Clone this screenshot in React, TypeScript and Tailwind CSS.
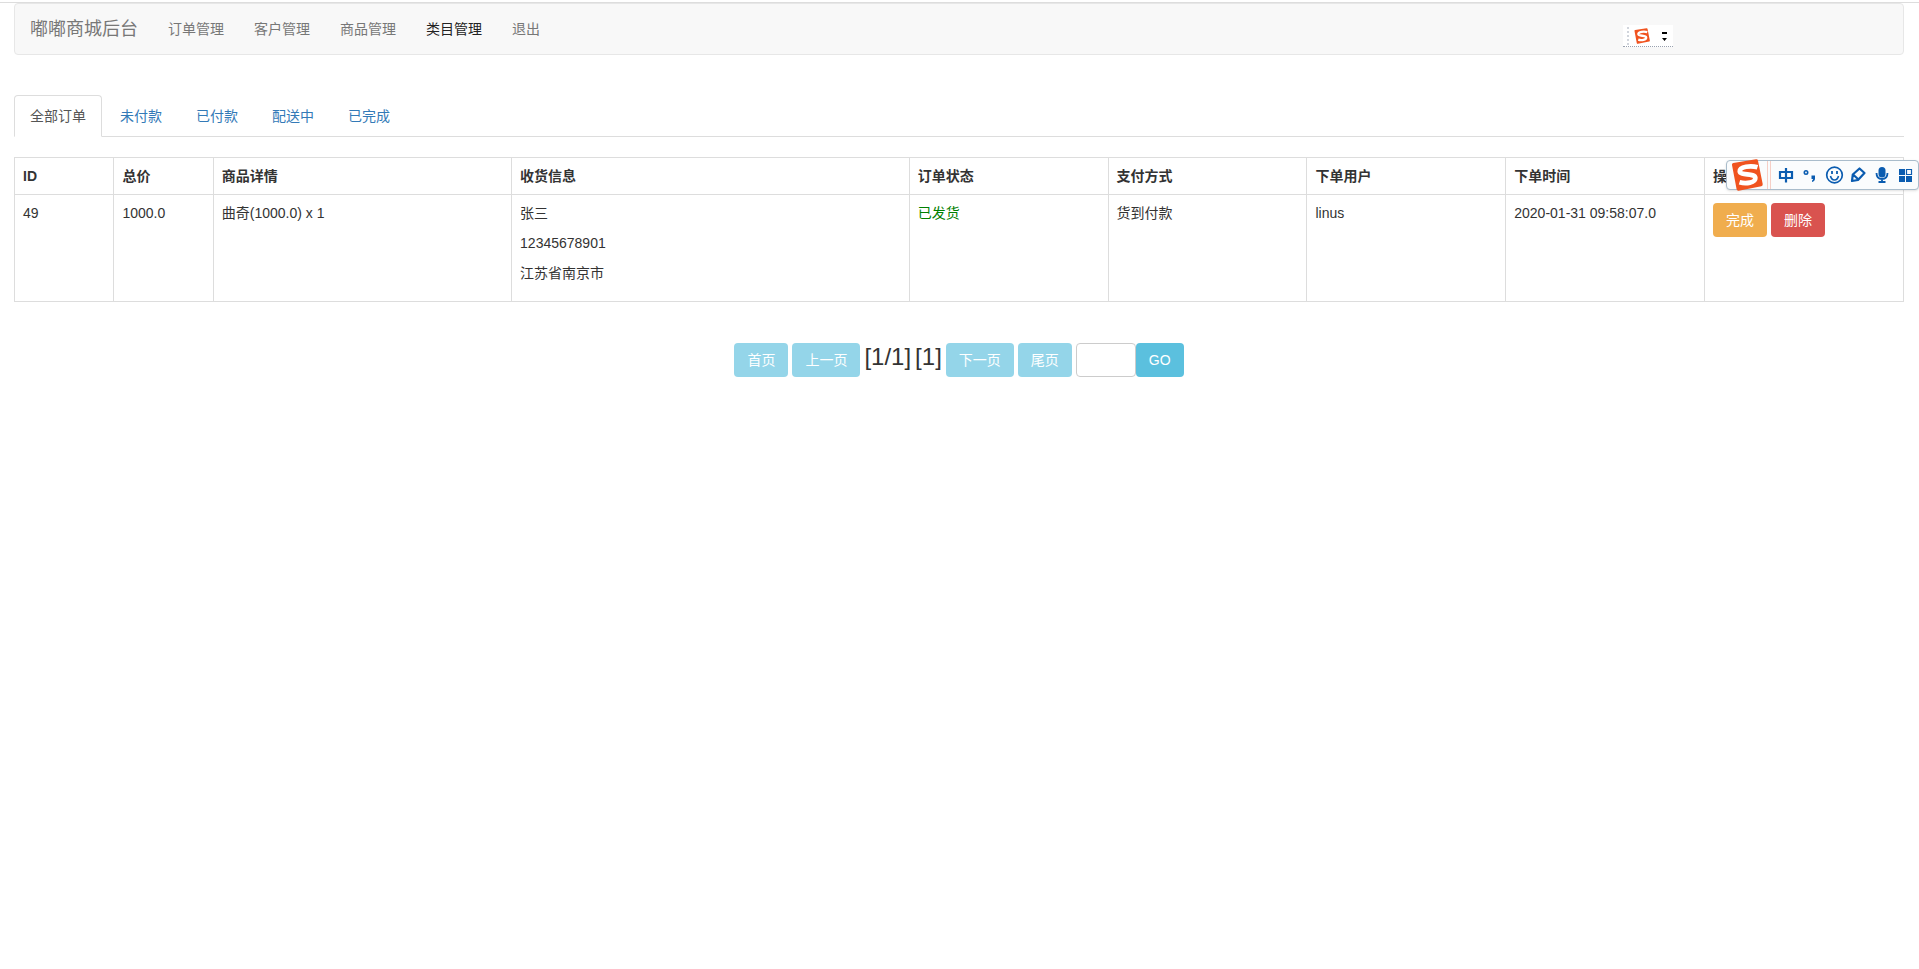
import { useState } from 'react'

const navItems = ['订单管理', '客户管理', '商品管理', '类目管理', '退出']
const tabs = ['全部订单', '未付款', '已付款', '配送中', '已完成']

const columns = [
  { title: 'ID', width: 'w-[5%]' },
  { title: '总价', width: 'w-[5%]' },
  { title: '商品详情', width: 'w-[15%]' },
  { title: '收货信息', width: 'w-[20%]' },
  { title: '订单状态', width: 'w-[10%]' },
  { title: '支付方式', width: 'w-[10%]' },
  { title: '下单用户', width: 'w-[10%]' },
  { title: '下单时间', width: 'w-[10%]' },
  { title: '操作', width: 'w-[10%]' },
]

const orders = [
  {
    id: 49,
    total: '1000.0',
    detail: '曲奇(1000.0) x 1',
    receiver: ['张三', '12345678901', '江苏省南京市'],
    status: '已发货',
    payment: '货到付款',
    user: 'linus',
    time: '2020-01-31 09:58:07.0',
  },
]

const btn = 'h-[34px] px-[13px] rounded text-white'

function SogouLogo({ className }: { className: string }) {
  return (
    <svg viewBox="0 0 32 32" className={className} aria-hidden="true">
      <path d="M1 6 Q0.600 4.300 2.300 4 L25 0.300 Q26.700 0 27 1.700 L31.700 25 Q32 26.800 30.300 27.200 L7.700 31.700 Q6 32 5.600 30.300 Z" fill="#f0531f" />
      <path
        d="M26.500 8.300 C20 6.300 8.500 7.500 8.800 12.300 C9.200 17 24 13.800 24.300 19 C24.500 23.800 15 25.300 8.500 23.300"
        fill="none"
        stroke="#fff"
        strokeWidth="4.800"
      />
    </svg>
  )
}

// Floating input-method toolbar
function ImeBar() {
  return (
    <div className="absolute right-0 top-[160px] flex h-[30px] w-[193px] items-center rounded-sm border border-[#a9bccb] bg-[#fafcfd] text-[#0a5cb0] shadow-sm">
      <SogouLogo className="ml-1 size-8 shrink-0" />
      <div className="ml-1 h-full w-1 shrink-0 border-x border-[#f6cfc6]" />
      <svg viewBox="0 0 144 28" className="h-7 w-36 shrink-0" fill="none" stroke="currentColor" strokeWidth="2" aria-hidden="true">
        {/* language */}
        <path d="M9 11h12v6H9zM15 7v14.500" strokeWidth="2.200" />
        {/* punctuation */}
        <circle cx="35" cy="11.500" r="1.700" strokeWidth="1.600" />
        <path d="M40.500 14.500h3.500v3q0 2.500-3 3.500v-1.500q1-.5 1-1.500h-1.500z" fill="currentColor" stroke="none" />
        {/* emoji */}
        <circle cx="63.500" cy="14" r="7.800" strokeWidth="1.700" />
        <path d="M59.500 15q1 4 4 4t4-4" strokeWidth="1.600" />
        <path d="M61 10v3M66 10v3" strokeWidth="1.800" />
        {/* pen */}
        <path d="M81 20l.8-6.500 6.700-6 5 4.500-6.500 7zM82 13.500l5.500 5" strokeWidth="2.200" strokeLinejoin="round" />
        {/* microphone */}
        <rect x="107.500" y="6" width="7" height="10.500" rx="3.500" fill="currentColor" stroke="none" />
        <path d="M105.500 12q0 6 5.500 6t5.500-6M111 18v3M107.500 21h7" strokeWidth="1.800" />
        {/* toolbox */}
        <path d="M128 8h6v6h-6zM128 15h6v6h-6zM135 15h6v6h-6z" fill="currentColor" stroke="none" />
        <path d="M135.500 8.500h5v5h-5z" strokeWidth="1.200" />
      </svg>
    </div>
  )
}

// Collapsed language bar docked over the navbar
function LanguageBar() {
  return (
    <div className="absolute right-[246px] top-[25px] flex h-[22px] w-[50px] items-center border-b border-dotted border-gray-400 bg-white">
      <div className="ml-1 h-[18px] border-l-2 border-dotted border-gray-300" />
      <SogouLogo className="ml-[5px] size-4" />
      <svg viewBox="0 0 6 12" className="ml-[11px] h-3 w-[6px]" aria-hidden="true">
        <path d="M1 2h5v2H1zM1 8h5L3.500 11z" fill="#000" />
      </svg>
    </div>
  )
}

export default function App() {
  const [activeTab, setActiveTab] = useState(tabs[0])
  const [page, setPage] = useState('')

  return (
    <div className="relative bg-white pt-[2px] text-[14px] leading-5 text-[#333] font-['Liberation_Sans','Noto_Sans_CJK_SC',sans-serif]">
      <div className="border-t border-[#ddd] pl-[14px] pr-[15px]">
        {/* Navbar */}
        <nav className="flex h-[52px] items-center rounded border border-[#e7e7e7] bg-[#f8f8f8] text-[#777]">
          <a href="#" className="px-[15px] text-lg leading-5">嘟嘟商城后台</a>
          {navItems.map((item) => (
            <a key={item} href="#" className={`px-[15px] ${item === '类目管理' ? 'text-[#222]' : ''}`}>
              {item}
            </a>
          ))}
        </nav>

        {/* Status tabs */}
        <div className="mt-10 flex gap-[2px] border-b border-[#ddd]">
          {tabs.map((tab) => (
            <button
              key={tab}
              onClick={() => setActiveTab(tab)}
              className={`-mb-px h-[42px] rounded-t border px-[15px] ${
                tab === activeTab
                  ? 'border-[#ddd] border-b-white bg-white text-[#555]'
                  : 'border-transparent text-[#337ab7]'
              }`}
            >
              {tab}
            </button>
          ))}
        </div>

        {/* Orders */}
        <table className="mt-5 w-full table-fixed border-collapse">
          <thead>
            <tr>
              {columns.map((col) => (
                <th key={col.title} className={`border border-[#ddd] p-2 text-left font-bold ${col.width}`}>
                  {col.title}
                </th>
              ))}
            </tr>
          </thead>
          <tbody>
            {orders.map((order) => (
              <tr key={order.id} className="align-top">
                <td className="border border-[#ddd] p-2">{order.id}</td>
                <td className="border border-[#ddd] p-2">{order.total}</td>
                <td className="border border-[#ddd] p-2">{order.detail}</td>
                <td className="border border-[#ddd] p-2">
                  {order.receiver.map((line) => (
                    <p key={line} className="mb-[10px]">{line}</p>
                  ))}
                </td>
                <td className="border border-[#ddd] p-2 text-[green]">{order.status}</td>
                <td className="border border-[#ddd] p-2">{order.payment}</td>
                <td className="border border-[#ddd] p-2">{order.user}</td>
                <td className="border border-[#ddd] p-2">{order.time}</td>
                <td className="border border-[#ddd] p-2">
                  <div className="flex gap-1">
                    <button className={`${btn} bg-[#f0ad4e]`}>完成</button>
                    <button className={`${btn} bg-[#d9534f]`}>删除</button>
                  </div>
                </td>
              </tr>
            ))}
          </tbody>
        </table>

        {/* Pagination */}
        <div className="mt-[41px] flex justify-center gap-1">
          <button disabled className={`${btn} bg-[#5bc0de] opacity-65`}>首页</button>
          <button disabled className={`${btn} bg-[#5bc0de] opacity-65`}>上一页</button>
          <span className="text-2xl leading-7">[1/1]</span>
          <span className="text-2xl leading-7">[1]</span>
          <button disabled className={`${btn} bg-[#5bc0de] opacity-65`}>下一页</button>
          <button disabled className={`${btn} bg-[#5bc0de] opacity-65`}>尾页</button>
          <div className="flex">
            <input
              aria-label="页码"
              value={page}
              onChange={(e) => setPage(e.target.value)}
              className="h-[34px] w-[60px] rounded border border-[#ccc] px-3"
            />
            <button className={`${btn} bg-[#5bc0de]`}>GO</button>
          </div>
        </div>
      </div>

      <LanguageBar />
      <ImeBar />
    </div>
  )
}
